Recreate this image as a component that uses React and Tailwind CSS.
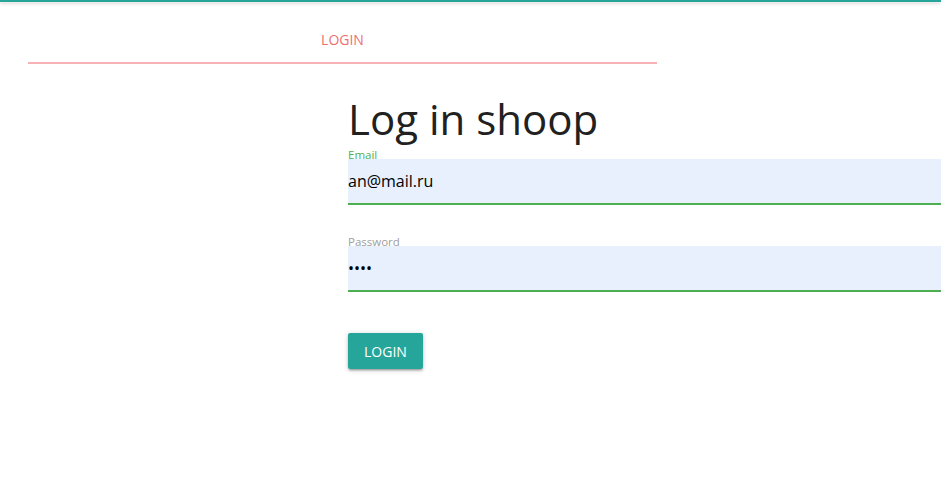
import React, { useState } from "react";

function App() {
  const [email, setEmail] = useState("an@mail.ru");
  const [password, setPassword] = useState("1234");

  return (
    <div
      className="w-[941px] h-[481px] overflow-hidden bg-white relative"
      style={{ fontFamily: '"Open Sans", "Noto Sans", sans-serif' }}
    >
      {/* top bar */}
      <div className="h-[2px] bg-[#26a69a] shadow-[0_2px_3px_rgba(0,0,0,0.15)]" />

      {/* tabs */}
      <div className="ml-[28px] w-[629px] mt-[28px]">
        <div className="h-[32px] flex items-start justify-center">
          <span className="text-[14px] leading-[20px] text-[#ee6e73] uppercase">Login</span>
        </div>
        <div className="h-[2px] bg-[#f6b2b5]" />
      </div>

      {/* form */}
      <div className="ml-[348px] w-[700px] mt-[25px]">
        <h3 className="text-[42px] leading-[60px] text-[#212121] font-normal">Log in shoop</h3>

        <div>
          <label className="block text-[11.5px] leading-[12px] text-[#4caf50]">Email</label>
          <input
            type="email"
            value={email}
            onChange={(e) => setEmail(e.target.value)}
            className="block w-full h-[46px] -mt-[2px] bg-[#e8f0fe] border-b-2 border-[#4caf50] text-[16px] text-black outline-none"
          />
        </div>

        <div className="mt-[31px]">
          <label className="block text-[11.5px] leading-[12px] text-[#9e9e9e]">Password</label>
          <input
            type="password"
            value={password}
            onChange={(e) => setPassword(e.target.value)}
            className="block w-full h-[46px] -mt-[2px] bg-[#e8f0fe] border-b-2 border-[#4caf50] text-[16px] text-black outline-none"
          />
        </div>

        <button className="mt-[41px] h-[36px] px-[16px] bg-[#26a69a] text-white text-[14px] uppercase rounded-[2px] shadow-[0_2px_2px_rgba(0,0,0,0.14),0_3px_1px_-2px_rgba(0,0,0,0.12),0_1px_5px_rgba(0,0,0,0.2)]">
          Login
        </button>
      </div>
    </div>
  );
}

export default App;
